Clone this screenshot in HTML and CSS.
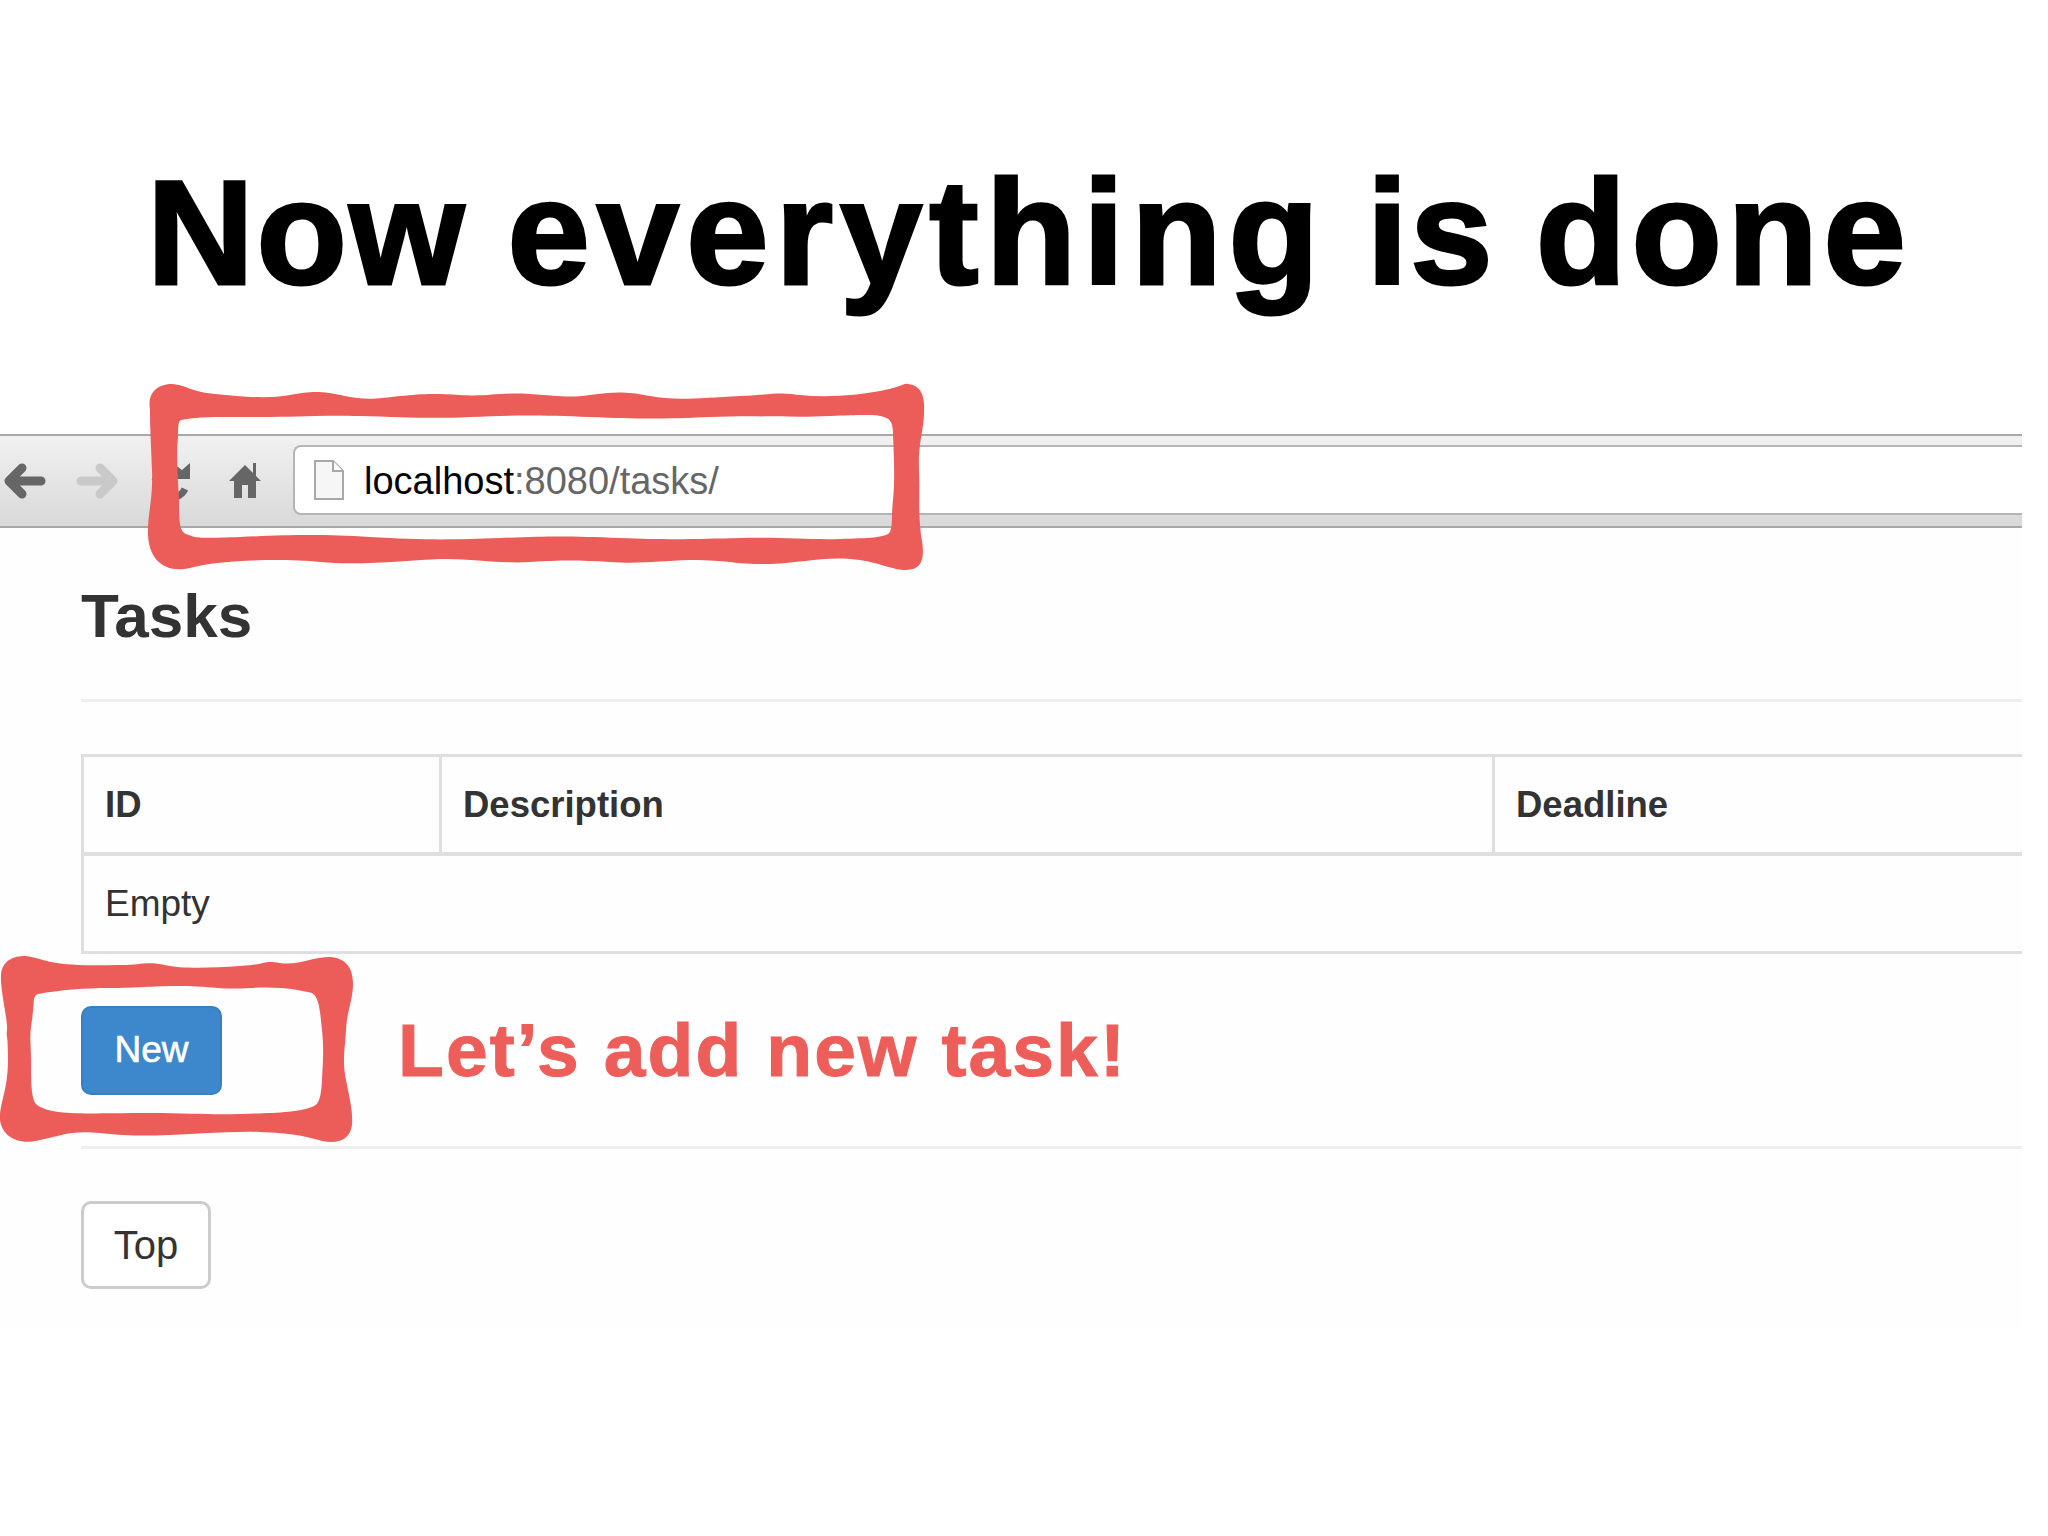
FILE: index.html
```html
<!DOCTYPE html>
<html lang="en">
<head>
<meta charset="utf-8">
<title>Now everything is done</title>
<link rel="stylesheet" href="styles.css">
</head>
<body>
<main class="slide">
  <h1 class="headline"><span class="tight">Now</span> <span class="wide">everything</span> <span class="tight">is</span> done</h1>

  <section class="shot">
    <div class="toolbar">
      <svg class="nav-icon" width="42" height="36" viewBox="0 0 42 36"><path class="arrow arrow-on" d="M37 18H6M18 5 5 18l13 13"/></svg>
      <svg class="nav-icon nav-forward" width="42" height="36" viewBox="0 0 42 36"><path class="arrow arrow-off" d="M5 18h31M24 5l13 13-13 13"/></svg>
      <svg class="nav-icon nav-reload" width="42" height="40" viewBox="0 0 42 40"><path class="reload-arc" d="M28 10A16 16 0 0 0 5 20M35 28a16 16 0 0 1-9 8"/><path class="reload-head" d="M26 5l6 4 8-7v16H26z"/></svg>
      <svg class="nav-icon nav-home" width="34" height="36" viewBox="0 0 34 36"><path class="home" d="M17 2 1 18h5v17h8V22h6v13h8V18h5l-5-5V0h-3v10z"/></svg>
      <div class="omnibox">
        <svg class="doc" width="32" height="42" viewBox="0 0 32 42"><path class="doc-page" d="M2 2h18l10 10v28H2z"/><path class="doc-fold" d="M20 2v10h10"/></svg>
        <span class="url"><span class="url-host">localhost</span>:8080/tasks/</span>
      </div>
    </div>

    <div class="page">
      <h2 class="page-title">Tasks</h2>
      <table class="tasks">
        <thead>
          <tr><th class="col-id">ID</th><th class="col-desc">Description</th><th>Deadline</th></tr>
        </thead>
        <tbody>
          <tr><td colspan="3">Empty</td></tr>
        </tbody>
      </table>
      <div class="actions">
        <a class="btn btn-primary">New</a>
        <p class="callout">Let’s add new task!</p>
      </div>
      <a class="btn btn-default">Top</a>
    </div>
  </section>

  <svg class="marks" width="2048" height="1536" viewBox="0 0 2048 1536">
    <path class="mark" fill-rule="evenodd" d="M150 410C147 392 158 384 172 384C186 385 192 392 215 394C245 397 268 399 290 395S322 391 345 396S380 398 400 396S432 393 460 395S500 392 530 394S568 398 590 395S625 391 650 396S700 398 740 396S772 392 800 395S858 395 880 391S904 383 908 384C921 385 925 396 924 412C924 430 918 442 919 470S918 510 921 535C925 556 924 570 906 570C890 570 878 561 850 559S800 563 770 564S720 559 690 560S640 564 610 562S560 560 530 562S470 558 440 559S360 566 320 562S220 560 190 568C165 574 147 560 148 530C148 512 153 500 152 470S150 430 150 410ZM181 420C198 416 228 417 260 417S318 415 360 416S430 419 470 417S540 415 590 417S660 419 710 417S790 418 830 416S880 415 884 417C891 419 893 424 893 434C894 460 895 480 893 500S893 524 890 532C886 538 868 538 840 539S780 537 740 538S670 540 620 538S550 536 500 538S420 540 370 537S290 535 240 537S196 537 186 534C180 531 179 525 179 500C178 480 176 452 178 438C178 428 178 421 181 420Z"/>
    <path class="mark" fill-rule="evenodd" d="M1 975C2 960 14 956 25 956C38 957 44 962 64 964S105 965 122 965S148 961 165 965S210 968 240 966S262 960 280 963S312 957 330 957C346 958 353 968 353 984C353 1000 347 1010 346 1030S342 1060 346 1080S353 1112 352 1125C350 1140 338 1144 322 1141C306 1136 290 1133 260 1132S200 1134 170 1135S130 1136 100 1133S60 1136 40 1140C18 1146 2 1136 0 1120C-1 1105 8 1090 8 1060S6 1040 7 1030S0 990 1 975ZM38 994C60 990 84 988 110 988S150 986 180 986S220 990 250 988S300 990 312 993C319 997 320 1010 322 1030S323 1060 322 1080S318 1104 314 1106C300 1113 270 1113 240 1114S190 1113 150 1113S90 1114 70 1113S40 1108 36 1104C31 1098 31 1080 31 1060S29 1040 32 1020S32 997 38 994Z"/>
  </svg>
</main>
</body>
</html>
```
FILE: styles.css
```css
* { box-sizing: border-box; }

html, body { margin: 0; background: #fff; }

body { font-family: "Liberation Sans", Arial, sans-serif; }

.slide {
  position: relative;
  width: 2048px;
  height: 1536px;
  overflow: hidden;
  background: #fff;
}

.headline {
  margin: 0;
  height: 434px;
  padding: 153px 0 0 147px;
  font-size: 148px;
  line-height: 160px;
  font-weight: 700;
  letter-spacing: 5.5px;
  word-spacing: -6px;
  color: #000;
  white-space: nowrap;
  -webkit-text-stroke: 3px #000;
}
.headline .tight { letter-spacing: 2.5px; }
.headline .wide { letter-spacing: 7px; }

.shot { width: 2022px; }

.toolbar {
  display: flex;
  align-items: center;
  height: 94px;
  padding-left: 4px;
  background: linear-gradient(#f1f1f1, #d9d9d9);
  border-top: 2px solid #a9a9a9;
  border-bottom: 2px solid #a9a9a9;
}

.nav-icon { flex: none; }
.nav-forward { margin-left: 30px; }
.nav-reload { margin-left: 32px; }
.nav-home { margin-left: 36px; }

.arrow {
  fill: none;
  stroke-width: 9;
  stroke-linecap: round;
  stroke-linejoin: round;
}
.arrow-on { stroke: #666; }
.arrow-off { stroke: #c9c9c9; }

.reload-arc { fill: none; stroke: #666; stroke-width: 7; }
.reload-head, .home { fill: #666; }

.omnibox {
  display: flex;
  align-items: center;
  flex: 1;
  height: 70px;
  margin: -2px 0 0 31px;
  padding-left: 18px;
  background: #fff;
  border: 2px solid #b5b5b5;
  border-right: 0;
  border-radius: 8px 0 0 8px;
}

.doc-page { fill: #f6f6f6; stroke: #a8a8a8; stroke-width: 2; }
.doc-fold { fill: #fff; stroke: #a8a8a8; stroke-width: 2; }

.url {
  margin: 2px 0 0 19px;
  font-size: 38px;
  color: #666;
  white-space: nowrap;
}
.url-host { color: #000; }

.page {
  height: 800px;
  padding-left: 81px;
  background: #fefefe;
}

.page-title {
  height: 174px;
  margin: 0 0 52px;
  padding-top: 52px;
  border-bottom: 3px solid #eee;
  font-size: 62px;
  line-height: 72px;
  font-weight: 700;
  color: #333;
}

.tasks {
  width: 100%;
  border-collapse: collapse;
  table-layout: fixed;
  font-size: 37px;
  color: #333;
}

.tasks th,
.tasks td {
  padding: 2px 21px 0;
  border: 3px solid #dfdfdf;
  border-right: 0;
  text-align: left;
}

.tasks th {
  height: 98px;
  border-bottom-width: 4px;
  font-size: 36.5px;
  font-weight: 700;
}
.tasks td { height: 99px; }

.tasks .col-id { width: 358px; }
.tasks .col-desc { width: 1053px; border-right: 0; }

.actions {
  display: flex;
  align-items: center;
  gap: 176px;
  height: 195px;
  margin-bottom: 52px;
  border-bottom: 3px solid #eee;
}

.btn {
  display: flex;
  align-items: center;
  justify-content: center;
  border-radius: 10px;
  font-size: 37px;
}

.btn-primary {
  width: 141px;
  height: 89px;
  background: #3d88cc;
  border: 2px solid #3a80c0;
  color: #fff;
  -webkit-text-stroke: 0.6px #fff;
}

.btn-default {
  width: 130px;
  height: 88px;
  background: #fff;
  border: 3px solid #ccc;
  font-size: 40px;
  color: #333;
}

.callout {
  margin: 0;
  font-size: 75px;
  font-weight: 700;
  letter-spacing: 2.1px;
  color: #ed5e5a;
  white-space: nowrap;
  -webkit-text-stroke: 1px #ed5e5a;
}

.marks {
  position: absolute;
  top: 0;
  left: 0;
}
.mark { fill: #ec5d59; }
```
